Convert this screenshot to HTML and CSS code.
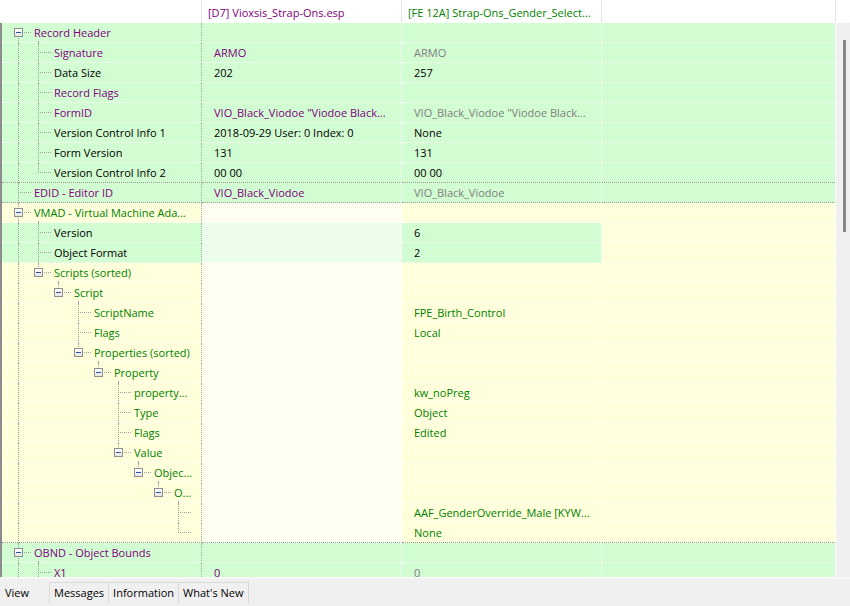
FILE: index.html
```html
<!DOCTYPE html>
<html>

<head>
    <meta charset="utf-8">
    <title>View</title>
    <link rel="stylesheet" href="styles.css">
</head>

<body>
    <div class="head">
        <div class="hc h1"></div>
        <div class="hc h2 p">[D7] Vioxsis_Strap-Ons.esp</div>
        <div class="hc h3 gr">[FE 12A] Strap-Ons_Gender_Select...</div>
        <div class="hc h4"></div>
        <div class="hc h5"></div>
    </div>
    <div class="body">
        <div class="grid">
            <!-- Record Header -->
            <div class="row grn">
                <div class="c1"><span class="g down"><i class="box"></i></span><span class="lbl p">Record Header</span></div>
                <div class="c2"></div><div class="c3"></div><div class="c4"></div>
            </div>
            <div class="row grn">
                <div class="c1"><span class="g pipe"></span><span class="g tee"></span><span class="lbl p">Signature</span></div>
                <div class="c2 p">ARMO</div><div class="c3 dim">ARMO</div><div class="c4"></div>
            </div>
            <div class="row grn">
                <div class="c1"><span class="g pipe"></span><span class="g tee"></span><span class="lbl">Data Size</span></div>
                <div class="c2">202</div><div class="c3">257</div><div class="c4"></div>
            </div>
            <div class="row grn">
                <div class="c1"><span class="g pipe"></span><span class="g tee"></span><span class="lbl p">Record Flags</span></div>
                <div class="c2"></div><div class="c3"></div><div class="c4"></div>
            </div>
            <div class="row grn">
                <div class="c1"><span class="g pipe"></span><span class="g tee"></span><span class="lbl p">FormID</span></div>
                <div class="c2 p">VIO_Black_Viodoe "Viodoe Black...</div><div class="c3 dim">VIO_Black_Viodoe "Viodoe Black...</div><div class="c4"></div>
            </div>
            <div class="row grn">
                <div class="c1"><span class="g pipe"></span><span class="g tee"></span><span class="lbl">Version Control Info 1</span></div>
                <div class="c2">2018-09-29 User: 0 Index: 0</div><div class="c3">None</div><div class="c4"></div>
            </div>
            <div class="row grn">
                <div class="c1"><span class="g pipe"></span><span class="g tee"></span><span class="lbl">Form Version</span></div>
                <div class="c2">131</div><div class="c3">131</div><div class="c4"></div>
            </div>
            <div class="row grn sep">
                <div class="c1"><span class="g pipe"></span><span class="g elbow"></span><span class="lbl">Version Control Info 2</span></div>
                <div class="c2">00 00</div><div class="c3">00 00</div><div class="c4"></div>
            </div>
            <!-- EDID -->
            <div class="row grn sep">
                <div class="c1"><span class="g tee"></span><span class="lbl p">EDID - Editor ID</span></div>
                <div class="c2 p">VIO_Black_Viodoe</div><div class="c3 dim">VIO_Black_Viodoe</div><div class="c4"></div>
            </div>
            <!-- VMAD -->
            <div class="row ylw">
                <div class="c1"><span class="g tee"><i class="box"></i></span><span class="lbl gr">VMAD - Virtual Machine Ada...</span></div>
                <div class="c2"></div><div class="c3"></div><div class="c4"></div>
            </div>
            <div class="row ylw hl">
                <div class="c1"><span class="g pipe"></span><span class="g tee"></span><span class="lbl">Version</span></div>
                <div class="c2"></div><div class="c3">6</div><div class="c4"></div>
            </div>
            <div class="row ylw hl">
                <div class="c1"><span class="g pipe"></span><span class="g tee"></span><span class="lbl">Object Format</span></div>
                <div class="c2"></div><div class="c3">2</div><div class="c4"></div>
            </div>
            <div class="row ylw">
                <div class="c1"><span class="g pipe"></span><span class="g elbow"><i class="box"></i></span><span class="lbl gr">Scripts (sorted)</span></div>
                <div class="c2"></div><div class="c3"></div><div class="c4"></div>
            </div>
            <div class="row ylw">
                <div class="c1"><span class="g pipe"></span><span class="g"></span><span class="g elbow"><i class="box"></i></span><span class="lbl gr">Script</span></div>
                <div class="c2"></div><div class="c3"></div><div class="c4"></div>
            </div>
            <div class="row ylw">
                <div class="c1"><span class="g pipe"></span><span class="g"></span><span class="g"></span><span class="g tee"></span><span class="lbl gr">ScriptName</span></div>
                <div class="c2"></div><div class="c3 gr">FPE_Birth_Control</div><div class="c4"></div>
            </div>
            <div class="row ylw">
                <div class="c1"><span class="g pipe"></span><span class="g"></span><span class="g"></span><span class="g tee"></span><span class="lbl gr">Flags</span></div>
                <div class="c2"></div><div class="c3 gr">Local</div><div class="c4"></div>
            </div>
            <div class="row ylw">
                <div class="c1"><span class="g pipe"></span><span class="g"></span><span class="g"></span><span class="g elbow"><i class="box"></i></span><span class="lbl gr">Properties (sorted)</span></div>
                <div class="c2"></div><div class="c3"></div><div class="c4"></div>
            </div>
            <div class="row ylw">
                <div class="c1"><span class="g pipe"></span><span class="g"></span><span class="g"></span><span class="g"></span><span class="g elbow"><i class="box"></i></span><span class="lbl gr">Property</span></div>
                <div class="c2"></div><div class="c3"></div><div class="c4"></div>
            </div>
            <div class="row ylw">
                <div class="c1"><span class="g pipe"></span><span class="g"></span><span class="g"></span><span class="g"></span><span class="g"></span><span class="g tee"></span><span class="lbl gr">property...</span></div>
                <div class="c2"></div><div class="c3 gr">kw_noPreg</div><div class="c4"></div>
            </div>
            <div class="row ylw">
                <div class="c1"><span class="g pipe"></span><span class="g"></span><span class="g"></span><span class="g"></span><span class="g"></span><span class="g tee"></span><span class="lbl gr">Type</span></div>
                <div class="c2"></div><div class="c3 gr">Object</div><div class="c4"></div>
            </div>
            <div class="row ylw">
                <div class="c1"><span class="g pipe"></span><span class="g"></span><span class="g"></span><span class="g"></span><span class="g"></span><span class="g tee"></span><span class="lbl gr">Flags</span></div>
                <div class="c2"></div><div class="c3 gr">Edited</div><div class="c4"></div>
            </div>
            <div class="row ylw">
                <div class="c1"><span class="g pipe"></span><span class="g"></span><span class="g"></span><span class="g"></span><span class="g"></span><span class="g elbow"><i class="box"></i></span><span class="lbl gr">Value</span></div>
                <div class="c2"></div><div class="c3"></div><div class="c4"></div>
            </div>
            <div class="row ylw">
                <div class="c1"><span class="g pipe"></span><span class="g"></span><span class="g"></span><span class="g"></span><span class="g"></span><span class="g"></span><span class="g elbow"><i class="box"></i></span><span class="lbl gr">Objec...</span></div>
                <div class="c2"></div><div class="c3"></div><div class="c4"></div>
            </div>
            <div class="row ylw">
                <div class="c1"><span class="g pipe"></span><span class="g"></span><span class="g"></span><span class="g"></span><span class="g"></span><span class="g"></span><span class="g"></span><span class="g elbow"><i class="box"></i></span><span class="lbl gr">O...</span></div>
                <div class="c2"></div><div class="c3"></div><div class="c4"></div>
            </div>
            <div class="row ylw">
                <div class="c1"><span class="g pipe"></span><span class="g"></span><span class="g"></span><span class="g"></span><span class="g"></span><span class="g"></span><span class="g"></span><span class="g"></span><span class="g tee"></span></div>
                <div class="c2"></div><div class="c3 gr">AAF_GenderOverride_Male [KYW...</div><div class="c4"></div>
            </div>
            <div class="row ylw sep">
                <div class="c1"><span class="g pipe"></span><span class="g"></span><span class="g"></span><span class="g"></span><span class="g"></span><span class="g"></span><span class="g"></span><span class="g"></span><span class="g elbow"></span></div>
                <div class="c2"></div><div class="c3 gr">None</div><div class="c4"></div>
            </div>
            <!-- OBND -->
            <div class="row grn">
                <div class="c1"><span class="g tee"><i class="box"></i></span><span class="lbl p">OBND - Object Bounds</span></div>
                <div class="c2"></div><div class="c3"></div><div class="c4"></div>
            </div>
            <div class="row grn">
                <div class="c1"><span class="g pipe"></span><span class="g tee"></span><span class="lbl p">X1</span></div>
                <div class="c2 p">0</div><div class="c3 dim">0</div><div class="c4"></div>
            </div>
        </div>
        <div class="vscroll">
            <div class="thumb"></div>
        </div>
    </div>
    <ul class="tabs">
        <li class="current">View</li>
        <li>Messages</li>
        <li>Information</li>
        <li>What's New</li>
    </ul>
</body>

</html>
```

FILE: styles.css
```css
* {
    padding: 0;
    margin: 0;
    box-sizing: border-box;
}

ul {
    list-style: none;
}

html,
body {
    width: 100%;
    height: 100%;
}

body {
    display: flex;
    flex-direction: column;
    overflow: hidden;
    font-family: "Open Sans", "Noto Sans", sans-serif;
    font-size: 11px;
    color: #000;
    background: #fff;
}

.p {
    color: #800080;
}

.gr {
    color: #008000;
}

.dim {
    color: #808080;
}

/* header */
.head {
    display: flex;
    flex: none;
    height: 23px;
    background: #fff;
}

.hc {
    height: 23px;
    padding: 2px 0 0 6px;
    line-height: 21px;
    white-space: nowrap;
    overflow: hidden;
    border-right: 1px solid #e5e5e5;
}

.h1 {
    width: 202px;
}

.h2,
.h3 {
    width: 200px;
}

.h4 {
    width: 234px;
}

.h5 {
    flex: 1;
    border-right: 0;
}

/* grid */
.body {
    display: flex;
    flex: 1;
    min-height: 0;
}

.grid {
    flex: 1;
    overflow: hidden;
    border-left: 2px solid #8c8c8c;
}

.vscroll {
    width: 15px;
    padding: 17px 0 0 7px;
    border-left: 1px solid #fff;
    background: #f0f0f0;
}

.thumb {
    width: 3px;
    height: 192px;
    background: #878787;
}

.row {
    display: flex;
    height: 20px;
    line-height: 19px;
}

.row > div {
    height: 20px;
    white-space: nowrap;
    border-bottom: 1px dotted #fff;
}

.row.grn {
    background: #d2fcd2;
}

.row.ylw {
    background: #ffffdb;
}

.row.ylw .c2 {
    background: #fffff1;
}

.row.hl .c1,
.row.hl .c3 {
    background: #d2fcd2;
}

.row.hl .c2 {
    background: #ecfdec;
}

.row.sep > div {
    border-bottom-color: #9a9a9a;
}

.c1 {
    display: flex;
    width: 200px;
    border-right: 1px dotted #a8a8a8;
}

.c2,
.c3 {
    width: 200px;
    padding-left: 12px;
    overflow: hidden;
    border-right: 1px dotted #fff;
}

.c4 {
    flex: 1;
}

.lbl {
    margin-left: 12px;
    overflow: hidden;
}

/* tree lines */
.g {
    position: relative;
    flex: none;
    width: 20px;
}

.pipe::before,
.tee::before,
.elbow::before,
.down::before {
    content: "";
    position: absolute;
    left: 16px;
    top: 0;
    bottom: -1px;
    border-left: 1px dotted #a0a0a0;
}

.elbow::before {
    bottom: auto;
    height: 10px;
}

.down::before {
    top: 10px;
}

.tee::after,
.elbow::after,
.down::after {
    content: "";
    position: absolute;
    left: 16px;
    top: 9px;
    width: 13px;
    border-top: 1px dotted #a0a0a0;
}

.box {
    position: absolute;
    left: 12px;
    top: 5px;
    z-index: 1;
    width: 9px;
    height: 9px;
    border: 1px solid #8e8f8f;
    background: linear-gradient(#fff, #e4e4e4);
}

.box::before {
    content: "";
    position: absolute;
    left: 1px;
    top: 3px;
    width: 5px;
    height: 1px;
    background: #2f4f9f;
}

.box::after {
    content: "";
    position: absolute;
    left: 23px;
    top: 12px;
    height: 2px;
    border-left: 1px dotted #a0a0a0;
}

/* tabs */
.tabs {
    display: flex;
    align-items: flex-end;
    flex: none;
    height: 29px;
    padding-bottom: 3px;
    background: #f0f0f0;
    border-top: 2px solid #f8f8f8;
}

.tabs li {
    height: 21px;
    padding: 0 4px;
    line-height: 19px;
    white-space: nowrap;
    border: 1px solid #d9d9d9;
    border-bottom: 0;
    margin-left: -1px;
}

.tabs li.current {
    width: 50px;
    height: 24px;
    padding: 4px 0 0 5px;
    line-height: 20px;
    border: 0;
    margin-left: 0;
}
```
